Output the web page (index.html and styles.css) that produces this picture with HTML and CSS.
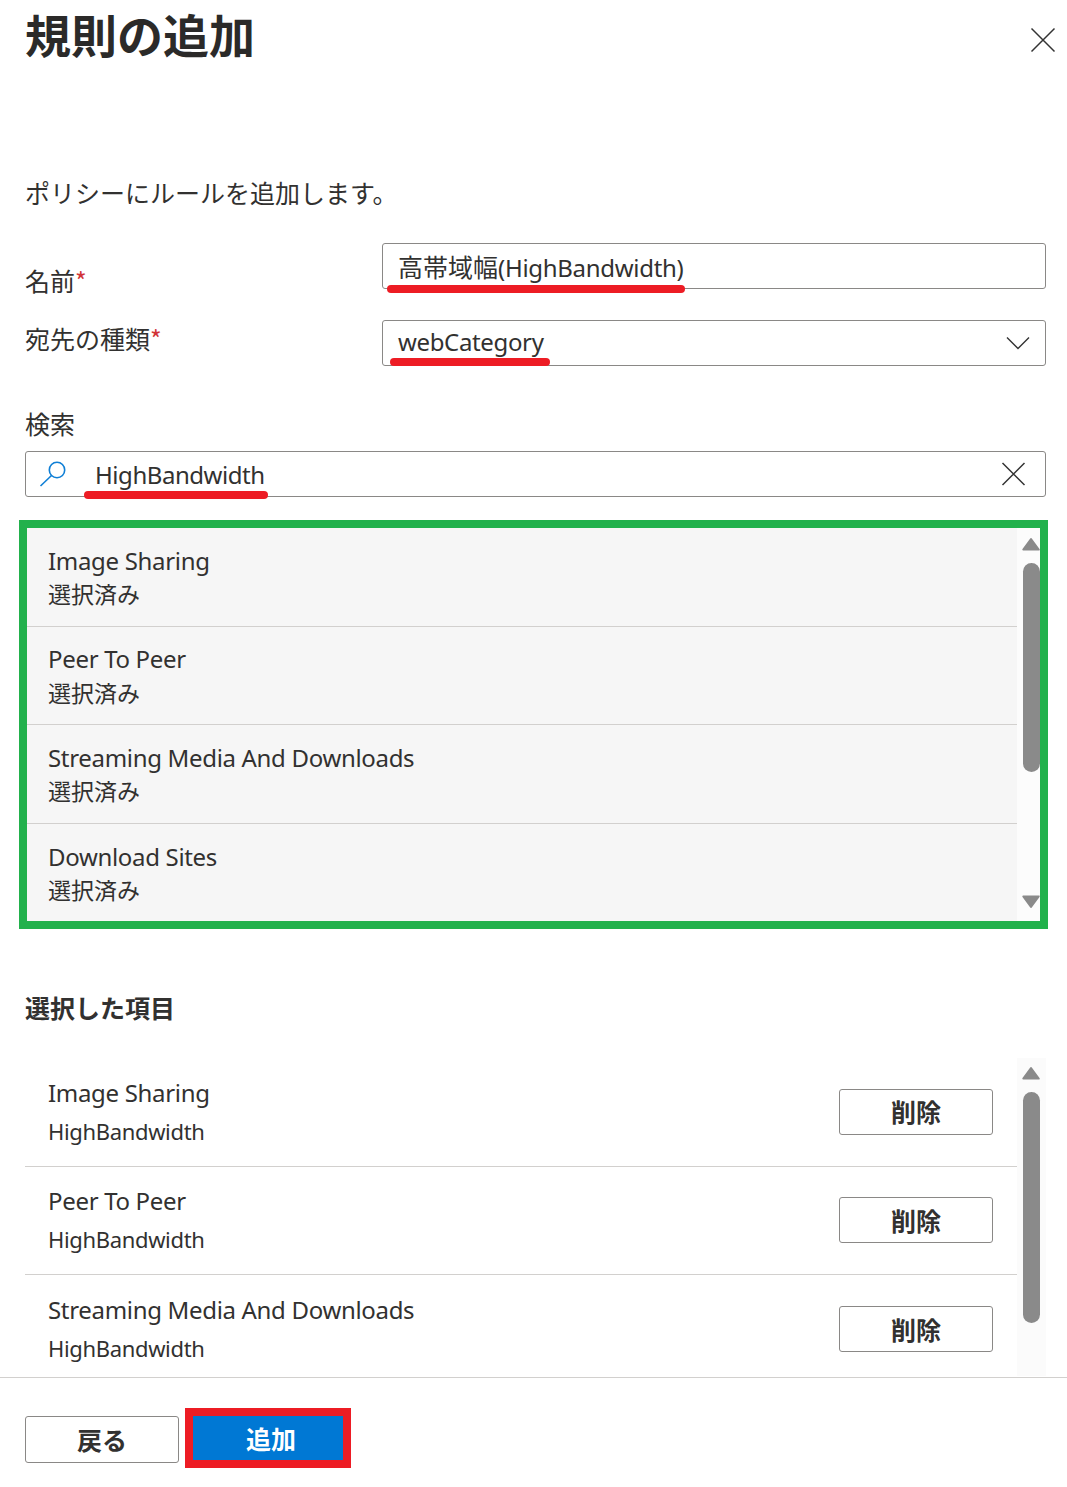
FILE: index.html
```html
<!DOCTYPE html>
<html lang="ja">
<head>
<meta charset="utf-8">
<title>規則の追加</title>
<link rel="stylesheet" href="styles.css">
</head>
<body>
<div class="panel">
  <div class="main">
    <header class="head">
      <h1 class="title">規則の追加</h1>
      <button class="close" aria-label="閉じる"><svg width="26" height="26" viewBox="0 0 26 26"><path d="M1.5 1.5 24.5 24.5M24.5 1.5 1.5 24.5" stroke="#333" stroke-width="1.5" fill="none"/></svg></button>
    </header>
    <p class="desc">ポリシーにルールを追加します。</p>
    <div class="form">
      <label class="lab lab-name">名前<span class="req">*</span></label>
      <div class="field mark-wrap"><span class="val val-name"><span class="cjk">高帯域幅</span>(HighBandwidth)</span><i class="mark mark-name"></i></div>
      <label class="lab lab-type">宛先の種類<span class="req">*</span></label>
      <div class="field field-sel mark-wrap"><span class="val val-type">webCategory</span><svg width="24" height="14" viewBox="0 0 24 14"><path d="M1 1.5 12 12.5 23 1.5" stroke="#333" stroke-width="1.4" fill="none"/></svg><i class="mark mark-type"></i></div>
    </div>
    <label class="lab lab-search">検索</label>
    <div class="field search mark-wrap">
      <svg class="ico-search" width="28" height="26" viewBox="0 0 28 26"><circle cx="18" cy="9" r="7.7" stroke="#0f7fd6" stroke-width="1.6" fill="none"/><path d="M12.5 14.5 1.5 25" stroke="#0f7fd6" stroke-width="1.6" fill="none"/></svg>
      <span class="val val-search">HighBandwidth</span>
      <svg class="ico-clear" width="25" height="24" viewBox="0 0 25 24"><path d="M1.5 1 23.5 23M23.5 1 1.5 23" stroke="#333" stroke-width="1.5" fill="none"/></svg>
      <i class="mark mark-search"></i>
    </div>
    <div class="results">
      <ul class="res-list">
        <li class="res-row"><div class="res-name">Image Sharing</div><div class="res-sub">選択済み</div></li>
        <li class="res-row"><div class="res-name">Peer To Peer</div><div class="res-sub">選択済み</div></li>
        <li class="res-row"><div class="res-name">Streaming Media And Downloads</div><div class="res-sub">選択済み</div></li>
        <li class="res-row"><div class="res-name">Download Sites</div><div class="res-sub">選択済み</div></li>
      </ul>
      <div class="sbar sbar-res">
        <svg class="arrow arrow-up" width="18" height="14" viewBox="0 0 18 14"><path d="M9 2 16.7 12.6H1.3Z" fill="#8a8a8a" stroke="#8a8a8a" stroke-width="2" stroke-linejoin="round"/></svg>
        <span class="thumb thumb-res"></span>
        <svg class="arrow arrow-down" width="18" height="14" viewBox="0 0 18 14"><path d="M9 12 16.7 1.4H1.3Z" fill="#8a8a8a" stroke="#8a8a8a" stroke-width="2" stroke-linejoin="round"/></svg>
      </div>
    </div>
    <h2 class="sel-title">選択した項目</h2>
    <div class="selected">
      <ul class="sel-list">
        <li class="sel-row"><div><div class="sel-name">Image Sharing</div><div class="sel-sub">HighBandwidth</div></div><button class="btn btn-del">削除</button></li>
        <li class="sel-row"><div><div class="sel-name">Peer To Peer</div><div class="sel-sub">HighBandwidth</div></div><button class="btn btn-del">削除</button></li>
        <li class="sel-row"><div><div class="sel-name">Streaming Media And Downloads</div><div class="sel-sub">HighBandwidth</div></div><button class="btn btn-del">削除</button></li>
      </ul>
      <div class="sbar sbar-sel">
        <svg class="arrow arrow-up" width="18" height="14" viewBox="0 0 18 14"><path d="M9 2 16.7 12.6H1.3Z" fill="#8a8a8a" stroke="#8a8a8a" stroke-width="2" stroke-linejoin="round"/></svg>
        <span class="thumb thumb-sel"></span>
      </div>
    </div>
  </div>
  <footer class="foot">
    <button class="btn btn-back">戻る</button>
    <div class="add-frame"><button class="btn-add">追加</button></div>
  </footer>
</div>
</body>
</html>
```
FILE: styles.css
```css
* { box-sizing: border-box; }
html, body { margin: 0; padding: 0; background: #fff; }
body { font-family: "Noto Sans", "Noto Sans CJK JP", sans-serif; color: #323130; }
ul { list-style: none; margin: 0; padding: 0; }
.panel { width: 1067px; height: 1487px; overflow: hidden; display: flex; flex-direction: column; }
.main { height: 1377px; overflow: hidden; padding: 0 21px 0 25px; flex: none; }
.head { display: flex; justify-content: space-between; height: 177px; margin-right: -10px; }
.title { margin: 0; font-size: 46px; line-height: 66px; font-weight: 700; color: #2b2a29; font-family: "Noto Sans CJK JP", sans-serif; }
.close { border: 0; background: none; padding: 0; margin-top: 27px; height: 26px; }
.desc { margin: 0; font-size: 25px; line-height: 30px; height: 66px; font-family: "Noto Sans CJK JP", sans-serif; }
.form { display: grid; grid-template-columns: 357px 664px; grid-template-rows: 46px 46px; row-gap: 31px; }
.lab { display: block; font-size: 25px; line-height: 30px; font-family: "Noto Sans CJK JP", sans-serif; }
.lab-name { padding-top: 22px; }
.lab-type { padding-top: 3px; }
.req { color: #d13438; }
.field { position: relative; border: 1px solid #8a8886; border-radius: 3px; height: 46px; display: flex; align-items: center; padding-left: 15px; font-size: 24px; letter-spacing: -.3px; }
.val { white-space: nowrap; line-height: 44px; }
.cjk { font-size: 25px; letter-spacing: 0; font-family: "Noto Sans CJK JP", sans-serif; }
.val-name { padding-top: 2px; }
.val-type { letter-spacing: -.35px; padding-bottom: 3px; }
.field-sel { justify-content: space-between; padding-right: 15px; }
.lab-search { margin-top: 42px; height: 43px; line-height: 30px; }
.search { padding-left: 13px; }
.ico-search { flex: none; }
.val-search { margin-left: 28px; letter-spacing: -.45px; padding-top: 1px; }
.ico-clear { margin-left: auto; margin-right: 19px; }
.mark { position: absolute; display: block; height: 8px; border-radius: 4px; background: #ed1c24; }
.mark-name { left: 4px; bottom: -5px; width: 298px; }
.mark-type { left: 7px; bottom: -1px; width: 160px; }
.mark-search { left: 58px; bottom: -3px; width: 184px; }
.results { margin: 23px 0 0 -6px; width: 1029px; height: 409px; border: 8px solid #22b14c; display: flex; overflow: hidden; }
.res-list { width: 990px; background: #f6f6f6; flex: none; }
.res-row { height: 98.7px; padding: 16.6px 0 0 21px; border-bottom: 1px solid #d2d0ce; }
.res-row:last-child { border-bottom: 0; }
.res-name { font-size: 24px; line-height: 32.4px; letter-spacing: -.32px; }
.res-sub { font-size: 23px; line-height: 33px; font-family: "Noto Sans CJK JP", sans-serif; }
.sbar { flex: 1; background: #fcfcfc; display: flex; flex-direction: column; align-items: flex-start; padding-left: 5px; }
.thumb { display: block; width: 17px; background: #8a8a8a; border-radius: 9px; flex: none; margin-left: 1px; }
.arrow { display: block; flex: none; }
.sbar-res .arrow-up { margin-top: 9px; }
.thumb-res { height: 209px; margin-top: 12px; }
.sbar-res .arrow-down { margin-top: 123px; }
.sel-title { margin: 62px 0 0; font-size: 25px; line-height: 33px; height: 67px; font-weight: 700; font-family: "Noto Sans CJK JP", sans-serif; }
.selected { display: flex; height: 318px; overflow: hidden; }
.sel-list { width: 992px; flex: none; }
.sel-row { height: 108.5px; border-bottom: 1px solid #d2d0ce; padding: 0 24px 0 23px; display: flex; justify-content: space-between; align-items: center; }
.sel-row:last-child { border-bottom: 0; }
.sel-name { font-size: 24px; line-height: 39px; letter-spacing: -.32px; }
.sel-sub { font-size: 22px; line-height: 39px; letter-spacing: -.34px; }
.btn { background: #fff; border: 1px solid #8a8886; border-radius: 3px; font-family: "Noto Sans CJK JP", sans-serif; font-weight: 700; font-size: 25px; color: #323130; padding: 0 0 1px; }
.btn-del { width: 154px; height: 46px; }
.sbar-sel { background: #fbfbfb; }
.sbar-sel .arrow-up { margin-top: 8px; }
.thumb-sel { height: 231px; margin-top: 12px; }
.foot { flex: 1; border-top: 1px solid #d2d0ce; display: flex; align-items: flex-start; padding: 38px 0 0 25px; }
.btn-back { width: 154px; height: 47px; }
.add-frame { margin: -8px 0 0 6px; border: 8px solid #ed1c24; width: 166px; height: 60px; flex: none; }
.btn-add { display: block; width: 100%; height: 100%; border: 0; background: #0078d4; color: #fff; font-family: "Noto Sans CJK JP", sans-serif; font-weight: 700; font-size: 25px; padding: 0 0 0 6px; }
```
